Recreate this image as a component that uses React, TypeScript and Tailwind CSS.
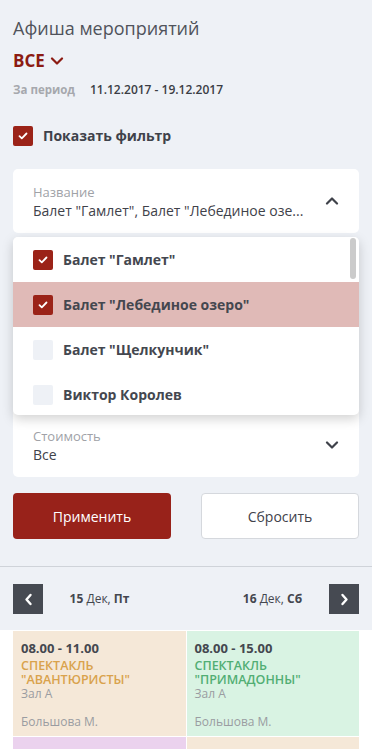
import { useState } from 'react';

type Option = { label: string; checked: boolean; active?: boolean };

const options: Option[] = [
  { label: 'Балет "Гамлет"', checked: true },
  { label: 'Балет "Лебединое озеро"', checked: true, active: true },
  { label: 'Балет "Щелкунчик"', checked: false },
  { label: 'Виктор Королев', checked: false },
];

type Show = { time: string; title: string[]; hall: string; author: string; bg: string; color: string };

const shows: Show[] = [
  { time: '08.00 - 11.00', title: ['СПЕКТАКЛЬ', '"АВАНТЮРИСТЫ"'], hall: 'Зал А', author: 'Большова М.', bg: 'bg-[#f5e8d8]', color: 'text-[#d9a24c]' },
  { time: '08.00 - 15.00', title: ['СПЕКТАКЛЬ', '"ПРИМАДОННЫ"'], hall: 'Зал А', author: 'Большова М.', bg: 'bg-[#d9f3e3]', color: 'text-[#52ae74]' },
  { time: '10.30 - 12.00', title: ['КОНЦЕРТ', '"ВЕЧЕР"'], hall: 'Зал Б', author: 'Иванов П.', bg: 'bg-[#ebd2ee]', color: 'text-[#a45cb0]' },
  { time: '09.30 - 17.00', title: ['СПЕКТАКЛЬ', '"ЧАЙКА"'], hall: 'Зал А', author: 'Большова М.', bg: 'bg-[#f5e8d8]', color: 'text-[#d9a24c]' },
];

function Check({ on }: { on: boolean }) {
  if (!on) return <span className="w-5 h-5 rounded-[2px] bg-[#eef1f6] shrink-0" />;
  return (
    <span className="w-5 h-5 rounded-[2px] bg-[#9b2318] shrink-0 flex items-center justify-center">
      <svg width="10" height="8" viewBox="0 0 10 8" fill="none">
        <path d="M1.5 4.2 L3.8 6.3 L8.5 1.5" stroke="white" strokeWidth="1.8" strokeLinecap="round" strokeLinejoin="round" />
      </svg>
    </span>
  );
}

function Chevron({ up, color = '#3f424a' }: { up?: boolean; color?: string }) {
  return (
    <svg width="14" height="9" viewBox="0 0 14 9" fill="none">
      <path d={up ? 'M2 7.5 L7 2.5 L12 7.5' : 'M2 1.5 L7 6.5 L12 1.5'} stroke={color} strokeWidth="2.2" strokeLinecap="round" strokeLinejoin="round" />
    </svg>
  );
}

export default function App() {
  const [showFilter] = useState(true);

  return (
    <div className="w-[372px] h-[749px] overflow-hidden bg-[#eef1f6] font-['Open_Sans',sans-serif]">
      {/* Header */}
      <div className="px-[13px] pt-[16px]">
        <h1 className="text-[18px] leading-[24px] text-[#50535b] font-normal">Афиша мероприятий</h1>
        <div className="mt-[10px] flex items-center gap-[5px]">
          <span className="text-[17px] leading-[22px] font-bold text-[#8c1b12]">ВСЕ</span>
          <Chevron color="#8c1b12" />
        </div>
        <div className="mt-[9px] flex items-center gap-[15px]">
          <span className="text-[11.5px] font-bold text-[#a6a8ad]">За период</span>
          <span className="text-[12px] font-semibold text-[#3b3d44]">11.12.2017 - 19.12.2017</span>
        </div>
        <div className="mt-[26px] flex items-center gap-[10px]">
          <Check on={showFilter} />
          <span className="text-[14px] font-bold text-[#3f424a]">Показать фильтр</span>
        </div>
      </div>

      {/* Filter */}
      <div className="px-[13px] mt-[23px]">
        <div className="bg-white rounded-[5px] h-[64px] pl-[20px] pr-[20px] pt-[14px] flex items-start justify-between">
          <div className="min-w-0">
            <div className="text-[13px] leading-[18px] text-[#a0a2a7]">Название</div>
            <div className="text-[14px] leading-[20px] text-[#3f424a] whitespace-nowrap">Балет "Гамлет", Балет "Лебединое озе...</div>
          </div>
          <div className="pt-[13px]">
            <Chevron up />
          </div>
        </div>

        <div className="relative mt-[4px]">
          <div className="bg-white rounded-[5px] h-[240px] flex flex-col">
            <div className="h-[176px]" />
            <div className="flex-1 pl-[20px] pr-[20px] pt-[14px] flex items-start justify-between">
              <div>
                <div className="text-[13px] leading-[18px] text-[#a0a2a7]">Стоимость</div>
                <div className="text-[14px] leading-[20px] text-[#3f424a]">Все</div>
              </div>
              <div className="pt-[14px]">
                <Chevron />
              </div>
            </div>
          </div>

          <div className="absolute left-0 right-0 top-0 h-[178px] bg-white rounded-[5px] shadow-[0_4px_12px_rgba(0,0,0,0.18)] overflow-hidden">
            {options.map((o) => (
              <div key={o.label} className={`h-[45px] flex items-center gap-[10px] pl-[20px] ${o.active ? 'bg-[#e0bab7]' : ''}`}>
                <Check on={o.checked} />
                <span className="text-[14px] font-bold text-[#44474f]">{o.label}</span>
              </div>
            ))}
            <div className="absolute right-[3px] top-[1px] w-[6px] h-[41px] rounded-[3px] bg-[#cbcbcb]" />
          </div>
        </div>

        <div className="mt-[16px] grid grid-cols-2 gap-[30px]">
          <button className="h-[46px] rounded-[4px] bg-[#98221a] text-white text-[14px]">Применить</button>
          <button className="h-[46px] rounded-[4px] bg-white border border-[#d5d8dd] text-[#3f424a] text-[14px]">Сбросить</button>
        </div>
      </div>

      <div className="mt-[27px] border-t border-[#cfd3d9]" />

      {/* Day navigation */}
      <div className="px-[13px] pt-[17px] pb-[16px]">
        <div className="relative h-[30px] grid grid-cols-2 items-center">
          <div className="text-center text-[12px] text-[#44474f]"><b>15</b> Дек, <b>Пт</b></div>
          <div className="text-center text-[12px] text-[#44474f]"><b>16</b> Дек, <b>Сб</b></div>
          <button className="absolute left-0 top-0 w-[30px] h-[30px] bg-[#464a52] flex items-center justify-center">
            <svg width="9" height="13" viewBox="0 0 9 13" fill="none"><path d="M6.5 2 L2.5 6.5 L6.5 11" stroke="white" strokeWidth="2.4" strokeLinecap="round" strokeLinejoin="round" /></svg>
          </button>
          <button className="absolute right-0 top-0 w-[30px] h-[30px] bg-[#464a52] flex items-center justify-center">
            <svg width="9" height="13" viewBox="0 0 9 13" fill="none"><path d="M2.5 2 L6.5 6.5 L2.5 11" stroke="white" strokeWidth="2.4" strokeLinecap="round" strokeLinejoin="round" /></svg>
          </button>
        </div>
      </div>

      {/* Schedule */}
      <div className="bg-white px-[13px] pt-[1px]">
        <div className="grid grid-cols-2 gap-[1px]">
          {shows.map((s, i) => (
            <div key={i} className={`${s.bg} px-[8px] pt-[8px] pb-[7px]`}>
              <div className="text-[13px] leading-[18px] font-bold text-[#44474f]">{s.time}</div>
              <div className={`mt-[2px] text-[12.5px] leading-[14px] font-semibold ${s.color}`}>
                {s.title.map((t) => <div key={t}>{t}</div>)}
              </div>
              <div className="text-[12px] leading-[14px] text-[#9a9ca1]">{s.hall}</div>
              <div className="mt-[14px] text-[12px] leading-[14px] text-[#9a9ca1]">{s.author}</div>
            </div>
          ))}
        </div>
      </div>
    </div>
  );
}
